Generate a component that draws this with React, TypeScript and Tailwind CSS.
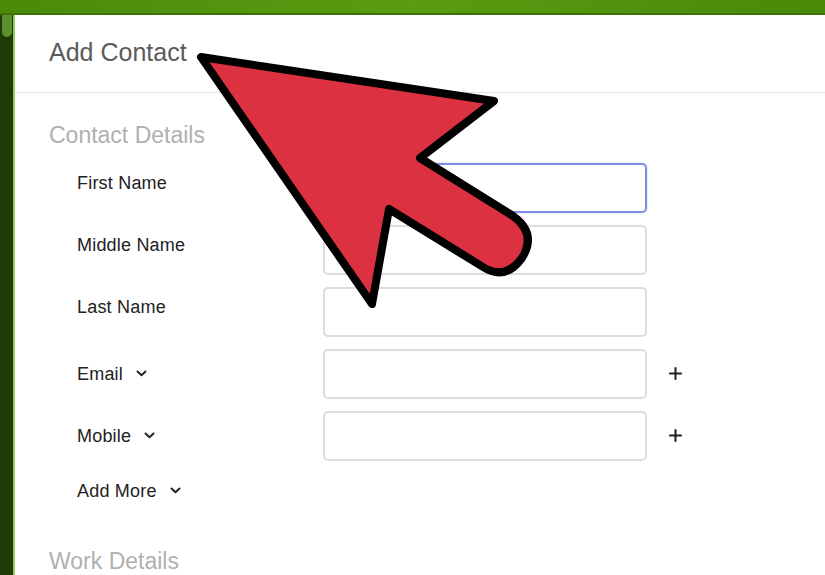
import { Plus } from 'lucide-react'

type Row = { label: string; chevron?: boolean; plus?: boolean; focused?: boolean; lift?: boolean }

const rows: Row[] = [
  { label: 'First Name', focused: true, lift: true },
  { label: 'Middle Name', lift: true },
  { label: 'Last Name', lift: true },
  { label: 'Email', chevron: true, plus: true },
  { label: 'Mobile', chevron: true, plus: true },
]

function Chevron() {
  return (
    <svg width="11" height="7" viewBox="0 0 11 7" className="shrink-0">
      <path d="M1.5 1.5 L5.5 5.2 L9.5 1.5" fill="none" stroke="#222" strokeWidth="2" strokeLinecap="round" strokeLinejoin="round" />
    </svg>
  )
}

export default function App() {
  return (
    <div className="relative w-[825px] h-[575px] overflow-hidden bg-white font-['Liberation_Sans',Arial,sans-serif]">
      {/* top green bar */}
      <div className="h-[15px] bg-gradient-to-r from-[#4b8a09] via-[#5a9b12] to-[#4a8808] border-b-2 border-[#3c7205]" />

      <div className="flex h-[560px]">
        {/* left strip */}
        <div className="relative w-[15px] shrink-0 bg-[#1f3b05] border-r-2 border-[#8fcf5e]">
          <div className="absolute left-[2px] top-0 w-[10px] h-[22px] rounded-b-full bg-[#5c8f30]" />
        </div>

        {/* panel */}
        <div className="flex-1 flex flex-col bg-white">
          <div className="h-[80px] pt-[22px] pl-[34px] border-b border-[#e3e3e3]">
            <h1 className="text-[25px] leading-[30px] text-[#5a5a5a]">Add Contact</h1>
          </div>

          <h2 className="mt-[28px] pl-[34px] text-[23px] leading-[28px] text-[#b0b0b0]">Contact Details</h2>

          <div className="mt-[14px] flex flex-col gap-[12px]">
            {rows.map(r => (
              <div key={r.label} className="flex items-center h-[50px]">
                <div className={`w-[308px] pl-[62px] flex items-center gap-[13px] ${r.lift ? 'pb-[9px]' : ''}`}>
                  <span className="text-[18px] leading-[22px] text-[#222] tracking-[0.2px]">{r.label}</span>
                  {r.chevron && <Chevron />}
                </div>
                <div
                  className={`w-[324px] h-[50px] rounded-[5px] bg-white ${
                    r.focused
                      ? 'border-2 border-[#7d8de6] shadow-[0_0_2px_rgba(125,141,230,0.5)]'
                      : 'border-2 border-[#dcdcdc]'
                  }`}
                />
                {r.plus && (
                  <Plus size={19} strokeWidth={2.6} className="ml-[19px] text-[#222]" />
                )}
              </div>
            ))}
          </div>

          <div className="h-[40px] flex items-center pl-[62px] gap-[13px] mt-[11px]">
            <span className="text-[18px] leading-[22px] text-[#222] tracking-[0.2px]">Add More</span>
            <Chevron />
          </div>

          <h2 className="mt-[37px] pl-[34px] text-[23px] leading-[28px] text-[#b0b0b0]">Work Details</h2>
        </div>
      </div>

      {/* red arrow overlay */}
      <svg className="absolute inset-0 pointer-events-none" width="825" height="575" viewBox="0 0 825 575">
        <path
          d="M201 57 L494 101 L420 158 L510 214 Q538 232 522 258 Q505 281 483 267 L389 209 L372 304 Z"
          fill="#dc3140"
          stroke="#000"
          strokeWidth="8"
          strokeLinejoin="round"
        />
      </svg>
    </div>
  )
}
